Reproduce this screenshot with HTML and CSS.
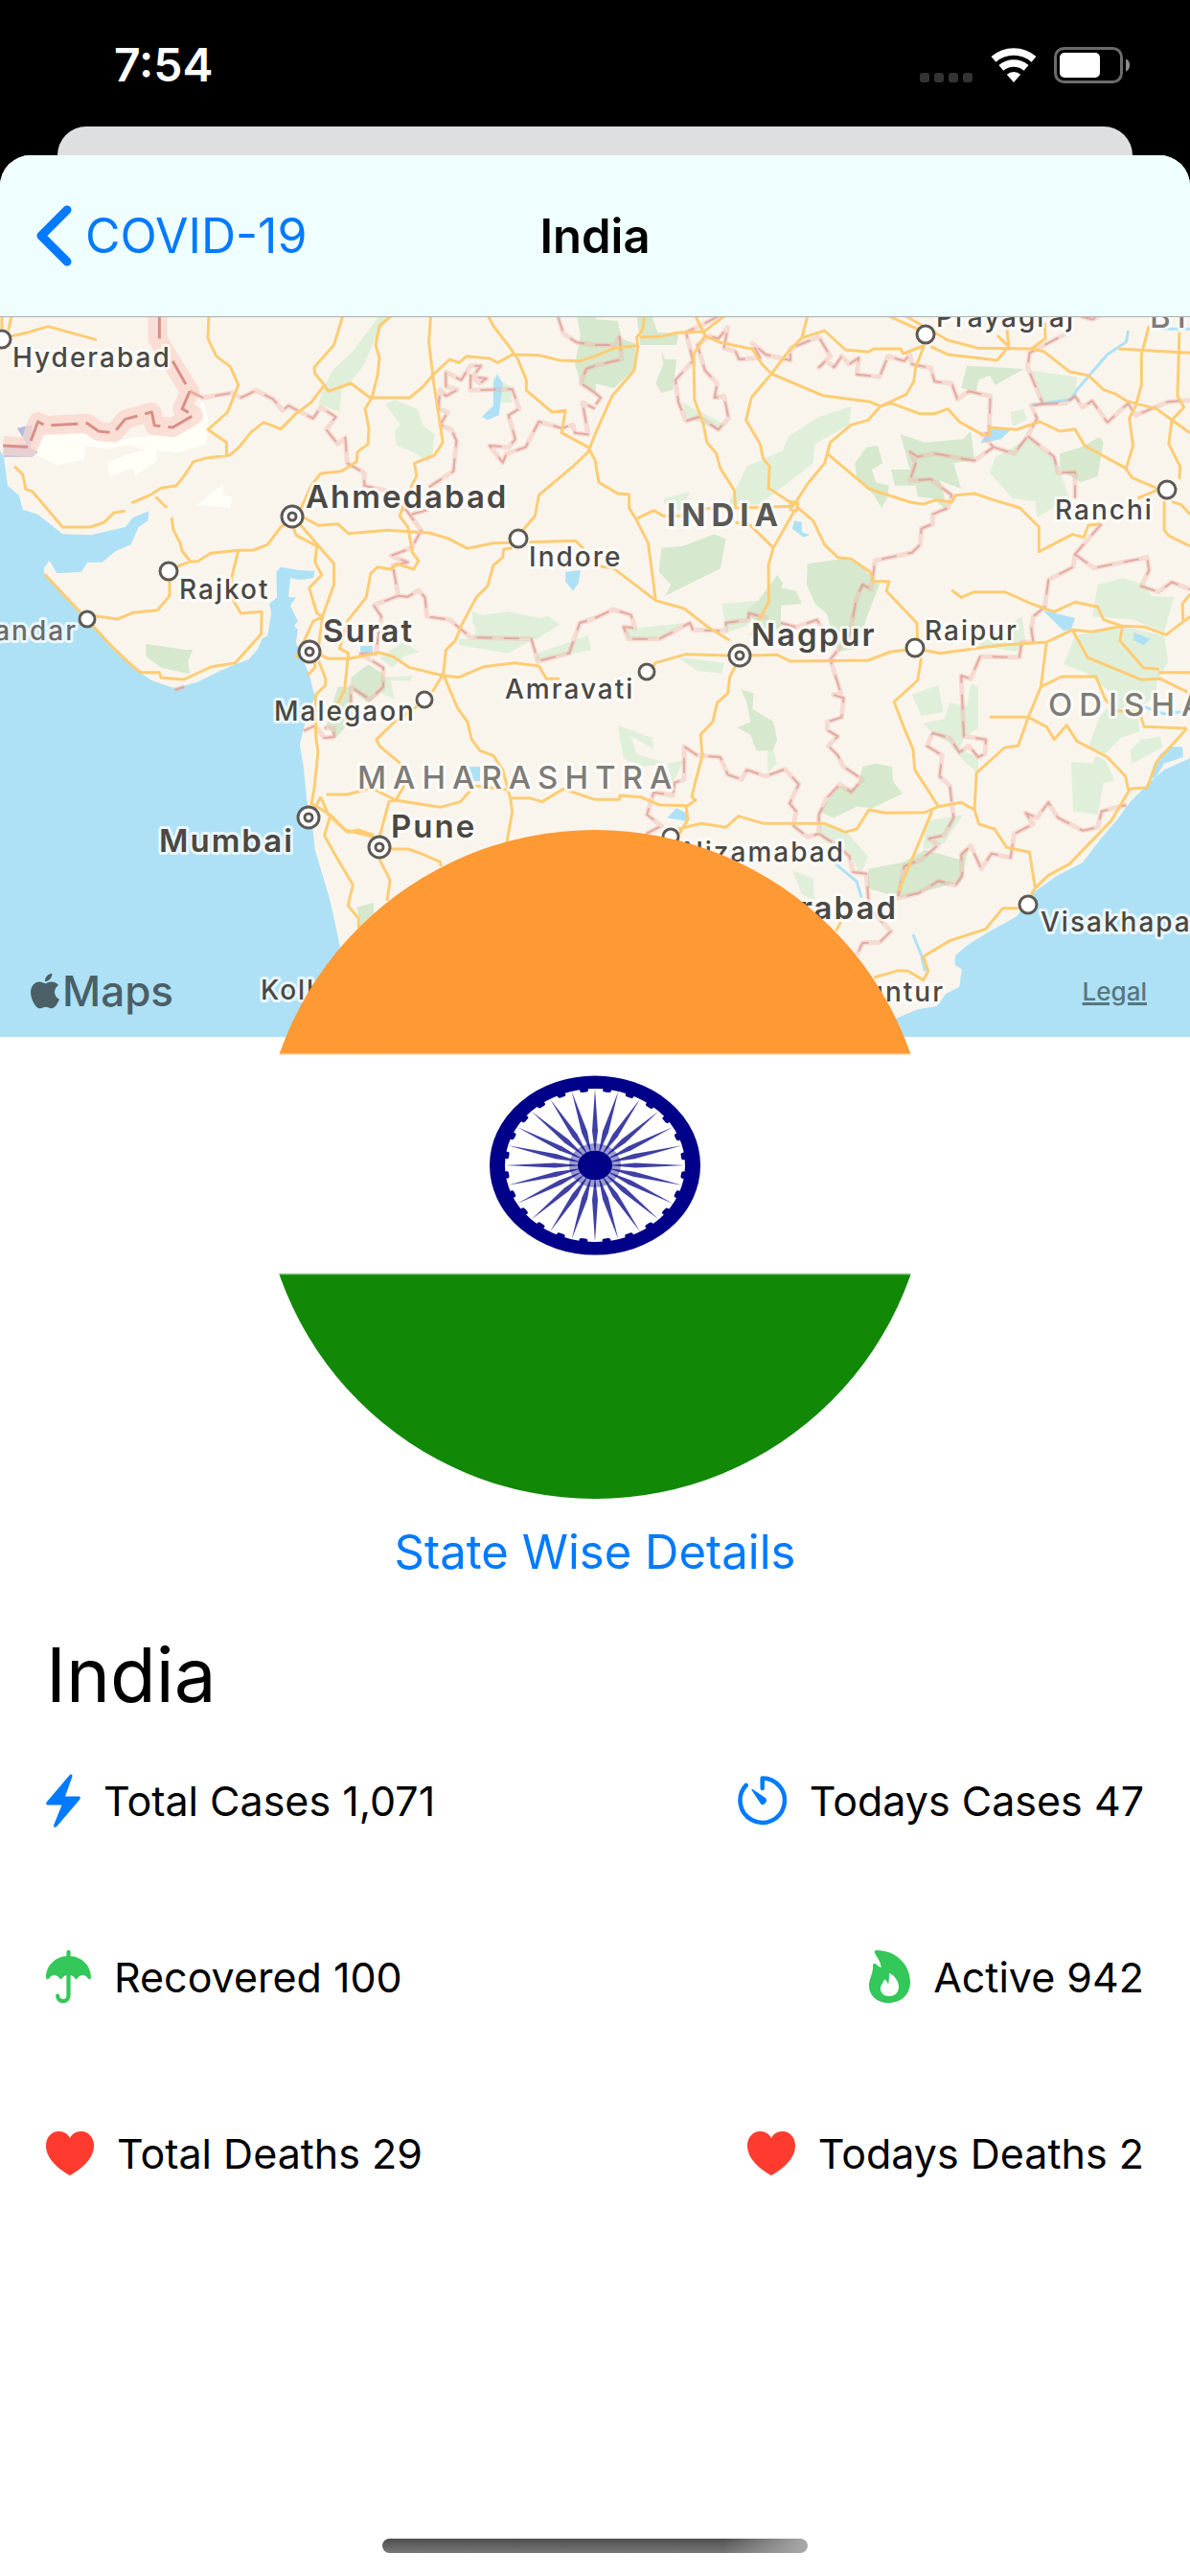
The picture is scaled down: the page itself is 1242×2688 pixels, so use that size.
FILE: index.html
```html
<!DOCTYPE html>
<html lang="en">
<head>
<meta charset="utf-8">
<meta name="viewport" content="width=device-width, initial-scale=1">
<title>India</title>
<link rel="stylesheet" href="styles.css">
</head>
<body>
<div class="status-bar">
  <span class="status-time">7:54</span>
  <div class="status-icons">
    <svg class="signal" width="56" height="36" viewBox="0 0 56 36" aria-hidden="true"><rect x="0" y="26" width="10" height="10" rx="3"/><rect x="15" y="26" width="10" height="10" rx="3"/><rect x="30" y="26" width="10" height="10" rx="3"/><rect x="45" y="26" width="10" height="10" rx="3"/></svg>
    <svg width="48" height="36" viewBox="0 0 48 36" aria-hidden="true"><g fill="none" stroke="#fff"><path d="M3 11.8A32 32 0 0 1 45 11.8" stroke-width="7.6"/><path d="M10.9 20.9A20 20 0 0 1 37.1 20.9" stroke-width="7.4"/></g><path d="M24 36L16.8 27.7A11 11 0 0 1 31.2 27.7Z" fill="#fff"/></svg>
    <svg width="80" height="38" viewBox="0 0 80 38" aria-hidden="true"><rect x="1.5" y="1.5" width="69" height="35" rx="9" fill="none" stroke="#6b6b6b" stroke-width="3"/><rect x="6" y="6" width="42" height="26" rx="5" fill="#fff"/><path d="M75 12.500C80.500 14.500 80.500 23.500 75 25.500Z" fill="#8a8a8a"/></svg>
  </div>
</div>
<div class="sheet-behind"></div>
<div class="sheet">
  <header class="nav-bar">
    <a class="back" href="#covid-19"><svg width="38" height="64" viewBox="0 0 38 64" aria-hidden="true"><path d="M33 5L6 32L33 59" fill="none" stroke="#007aff" stroke-width="9" stroke-linecap="round" stroke-linejoin="round"/></svg>COVID-19</a>
    <h2 class="nav-title">India</h2>
  </header>
  <main>
    <section class="map" aria-label="Map">
      <svg class="map-canvas" viewBox="0 0 1242 751" preserveAspectRatio="xMidYMid slice">
        <!-- western half -->
        <g class="terrain" transform="translate(0 -11) scale(.39605 .33333)">
          <path class="water" d="M-5 440L10 470 20 560 50 590 60 635 100 650 165 712 240 715 330 690 350 660 392 640 390 670 365 690 345 745 305 765 270 800 230 800 215 830 150 835 130 795 115 820 118 840 170 905 225 975 290 1060 350 1130 400 1170 460 1195 520 1175 580 1140 620 1120 655 1105 680 1070 690 1040 705 1030 715 960 710 930 730 910 728 830 740 815 790 825 830 828 825 850 790 855 765 850 760 910 780 910 765 935 785 985 775 1000 785 1010 780 1050 800 1110 815 1150 825 1200 830 1220 800 1320 790 1370 800 1440 808 1540 825 1640 830 1700 850 1780 870 1860 885 1940 895 2000 930 2140 960 2300 -5 2300Z"/>
          <path class="salt" d="M85 460L100 400 200 380 300 420 420 400 500 370 535 290 548 350 545 430 470 455 410 450 415 482 355 530 350 505 290 530 282 490 345 460 385 450 345 432 280 445 225 435 220 480 150 495ZM520 620L585 558 590 590 612 598 605 628Z"/>
          <path class="park" d="M1000 30L1025 35 985 110 960 180 925 235 900 260 895 330 840 305 850 260 875 200 930 140 960 90ZM1015 305L1040 292 1100 320 1115 370 1145 400 1140 460 1130 490 1090 455 1045 435 1040 390 1055 370ZM1245 955L1270 965 1340 955 1425 975 1445 968 1475 995 1415 1040 1245 1040 1255 1010 1245 990ZM1205 1040L1400 1045 1340 1085 1210 1060ZM1415 1085L1550 1030 1558 1075 1410 1110ZM1000 1100L1060 1050 1105 1080 1065 1095 1035 1130ZM1300 220L1345 250 1350 300 1300 300ZM1010 1160L1088 1155 1080 1172 1030 1170 1040 1230 1005 1210Z"/>
          <path class="forest" d="M385 1055L490 1075 508 1073 495 1110 500 1150 425 1130 385 1095ZM925 1160L970 1120 1010 1150 1015 1200 970 1240 925 1200ZM1520 30H1570V270L1530 240 1515 180 1530 90ZM890 1190L925 1190 930 1290 885 1350 860 1310ZM940 1880L985 1865 985 1905 950 1940Z"/>
          <path class="water" d="M1310 210L1325 240 1315 340 1285 355 1270 345 1300 310 1300 240ZM1490 830L1530 825 1525 865 1510 890 1490 860ZM950 1062L982 1062 982 1085 950 1085ZM1235 1440H1265V1485H1245Z"/>
          <path class="sea-shade" d="M45 380L85 370 80 440 100 455 85 470 10 470 10 435 70 430Z"/>
          <path class="nation-glow" d="M415 30L415 100 440 150 500 265 480 320 510 340 455 378 407 372 400 330 330 352 300 395 260 390 230 365 120 372 100 360 75 440 8 435"/>
          <path class="nation" d="M420 30L420 100M455 170L500 265 480 320 510 340 455 378 407 372 400 330 330 352 300 395 260 390 230 365 120 372 100 360 75 440 8 435"/>
          <defs>
            <path id="west-borders" d="M500 265L535 285 610 270 635 285 675 262 720 290 745 325 760 310 825 350 845 315 885 345 860 385 890 430 910 410 915 490 960 520 960 560 1015 575 1060 620 1110 700 1085 755 1030 780 1075 800 1035 810 1050 905 985 935 1005 970 990 1087 950 1087 1010 1130 1010 1190 975 1230 925 1190 925 1260M1050 905L1075 908 1103 888 1120 910 1125 970 1185 980 1240 1035 1400 1040 1418 1110 1500 1085 1528 990 1568 975M1085 650L1130 635M1130 565L1195 515 1203 420 1190 385 1160 370 1180 330 1155 320 1160 260 1175 280 1205 260 1175 250 1175 205 1215 230 1240 185 1268 185 1245 220 1282 225 1265 240 1240 215 1240 262 1350 258 1368 320 1340 340 1358 415 1340 440 1290 435 1325 488 1335 460 1385 440 1420 360 1480 380 1510 370 1515 395 1550 400 1535 300 1568 320M1470 30L1485 85 1520 112 1568 120M1568 185L1545 195 1530 240 1568 270M800 1328L830 1312 855 1350 880 1347 880 1320 855 1318M460 1200L486 1190"/>
          </defs>
          <use class="state-glow" href="#west-borders"/>
          <use class="state" href="#west-borders"/>
          <path class="road" d="M22 75L30 30M5 30V70M30 92L75 80 127 62 255 104M550 30L548 100 570 155 607 188 628 245 600 330 548 385 597 425 597 468M903 30L880 120 828 190 830 210 855 245 820 300 780 335 740 383 695 362 660 395 630 440 605 465 540 475 510 485 485 530 465 560 425 568 395 590 347 615M855 245L865 265 925 240 975 285 1080 285 1115 250 1140 215 1185 165 1210 175 1230 155 1290 162 1312 175 1350 150 1420 152 1475 168 1530 170 1568 155M1030 30L1000 60 990 120 1000 160 995 215 980 285 962 320 972 380 970 430 942 455 940 485 900 515 845 522 820 560 790 640M1135 30L1130 110 1137 180 1143 240 1155 330 1167 425 1145 465 1092 490 1098 530 1085 560 1053 655 1075 690 1087 770 1103 795 1090 822 1045 805 1030 822 995 815 977 835 965 910 915 985 895 1070 918 1085 908 1200 870 1290M1287 30L1300 60 1345 130 1365 165 1387 230 1387 262 1455 330 1490 325 1480 395 1550 440 1568 480M1568 400L1550 455 1510 500 1420 590 1410 655 1378 700M38 500L60 525 68 572 85 578 165 690 238 690 275 675 300 645 330 640M410 595L440 630M452 660L457 700 475 740 480 765 502 798M465 815L500 798 520 798 555 772 628 763 668 762 705 745 740 690 765 670M628 763L610 850 615 920 635 960 690 955 688 1025 620 1115 555 1128 485 1167 425 1162 420 1145 370 1145 340 1115 300 1070 230 980 118 838M250 968L310 978 350 958 415 950 447 905 447 855M800 660L840 685 890 680 918 710 1020 700 1130 708 1180 725 1232 757 1300 740 1365 738M770 680L780 715 835 750 830 800 848 840 815 880 835 960 850 970 825 985 800 1050 780 1100M790 680L880 805 880 870 850 970 840 1060M1395 737L1517 733 1540 760M1350 755L1327 760 1325 785 1300 810 1285 875 1255 910 1215 1000 1200 1045 1175 1075 1168 1155M845 1090L865 1102 920 1102 1000 1083 1035 1095 1080 1130 1168 1155 1210 1160 1275 1127 1357 1115 1420 1125 1440 1165 1475 1165M830 1110L830 1130 810 1155M840 1110L858 1165 858 1185 832 1215V1340L838 1395 828 1510 820 1560M1168 1150L1140 1205M1100 1250L1035 1305 992 1355 1000 1375 1055 1430 1065 1500 1043 1545 1025 1550 1000 1660M1168 1150L1205 1255 1232 1300 1243 1355 1265 1390 1300 1405 1325 1450 1345 1540 1350 1580 1335 1680M860 1527H915L980 1507 1043 1545 1160 1567 1213 1550 1250 1500 1335 1512M820 1555L870 1590 910 1638 985 1660M845 1535L865 1590 915 1645 945 1638 985 1655M845 1535L830 1570M870 1595L855 1655 885 1720 930 1810 917 1875 945 1915 945 1945M1030 1698H1075L1105 1710 1160 1738 1162 1752M1000 1730L1028 1795 1020 1860M1345 1538H1395L1428 1550 1485 1510 1568 1543"/>
        </g>
        <!-- eastern half -->
        <g class="terrain" transform="translate(621 -11) scale(.39605 .33333)">
          <path class="park" d="M675 312L670 370 580 430 575 490 500 560 430 620 350 620 400 500 495 450 510 405 590 345ZM1140 410L1215 480 1250 600 1165 660 1160 610 1100 600 1040 520 1055 470 1100 440ZM1150 200L1270 220 1265 290 1180 300ZM1095 330L1130 320 1138 355 1100 375ZM180 600L250 580 225 640 185 620ZM230 300L345 370 320 385 240 345ZM80 1010L235 990 170 1040 85 1040ZM215 1095L340 1115 335 1148 270 1140ZM1325 870L1390 850 1450 870 1465 905 1525 910 1500 1020 1420 980 1310 970ZM1265 1030L1390 1000 1500 1030 1510 1110 1480 1180 1480 1215 1430 1260 1435 1330 1385 1350 1345 1400 1300 1380 1330 1280 1380 1230 1300 1150 1235 1120ZM1125 970L1135 1050 1110 1080 1010 1060ZM335 930L430 920 400 1000 345 1020Z"/>
          <path class="forest" d="M0 40L60 45 70 100 105 115 110 190 50 255 0 240ZM110 30H150L165 80 220 85 215 120 120 120ZM175 140L185 165 215 165 205 260 175 270 160 240 180 180ZM715 440L745 435 758 490 730 510 740 550 775 560 770 600 755 630 735 590 690 540 685 490ZM805 400L870 425 970 415 990 390 1000 480 945 490 965 570 910 545 930 640 890 600 850 595 845 560 790 560 780 510 830 510ZM1225 460L1280 440 1330 408 1340 425 1325 530 1280 550 1225 510ZM980 185L1130 195 1055 245 1040 215 1010 230 1005 265 965 255ZM175 755L230 750 315 712 345 728 330 820 185 905 200 870 168 830ZM560 805L650 790 690 800 750 870 720 960 690 1070 640 1080 610 960 580 930 558 870ZM400 950L430 920 480 840 495 865 490 880 530 890 545 930 490 935 490 1010 435 1010Z"/>
          <g transform="translate(0 1140)">
            <path class="water" d="M1575 270L1500 310 1460 350 1440 375 1410 410 1380 460 1330 530 1285 600 1220 640 1160 690 1110 770 1040 815 980 860 950 890 948 920 967 935 960 990 925 1010 900 1050 850 1060 790 1090 760 1160H1575ZM1490 260L1515 238H1548L1550 270 1500 290 1480 330 1465 340 1470 300ZM190 460L215 430 240 445V470Z"/>
            <path class="park" d="M455 250H470L480 290 455 318ZM60 170L150 210 155 245 95 205 110 260 190 290 130 300 75 275ZM590 480L660 500 720 580 700 640 670 570 600 530ZM870 470L970 450 920 540 865 560ZM520 625L575 650 578 720 545 700ZM835 75L905 45 918 130 860 140ZM865 165L920 150 935 100 980 110 990 40 1010 50 1010 180 975 205 960 245 890 195ZM935 230L1010 270V320L970 280ZM1255 285L1310 290 1320 265 1345 280 1370 345 1340 350 1325 450 1260 440ZM1410 250L1440 215 1490 205 1495 240 1415 290ZM190 290L235 280 205 350Z"/>
            <path class="forest" d="M385 58L418 70 415 120 470 160 480 215 468 250 425 250 410 200 375 178 410 160 400 100ZM590 440L645 360 690 370 705 300 740 290 783 300 785 345 810 385 730 430 690 425 630 460ZM720 620L810 600 870 560 960 590 985 550 965 660 800 710 720 680Z"/>
            <path class="river" d="M610 560L640 610 690 660 702 710M838 825L860 890 870 940M1440 110L1500 135 1568 125"/>
          </g>
          <path class="water" d="M1040 385L1100 380 1070 415 1015 428ZM525 670L545 675V705L565 715 550 722 520 695ZM1180 950L1265 975 1255 1010 1235 1015ZM1420 1020L1465 1040 1445 1060 1420 1045Z"/>
          <path class="river" d="M1405 75L1400 110 1350 150 1270 260 1255 290 1150 308M1490 70H1568"/>
          <defs>
            <path id="east-borders" d="M0 120L50 120 65 95 70 165 0 185M0 270L15 285 0 310M325 30L285 55 240 80 258 170 212 230 220 300 240 358 275 345 325 385 352 350 340 280 315 285 322 240 290 200 270 120 300 92 325 100 350 65 340 130 370 140 380 165 435 160 415 115 450 150 515 168V130L590 95 620 155 590 190 610 170 630 190 650 155 670 180 695 160 690 212 750 220 772 155 815 170 830 150 835 180 885 192 895 235 940 240 955 290 985 265 1042 280 1038 395 1020 400 1050 440 1000 482 895 460 850 470 830 455 845 490 830 545 885 540 940 590 930 630 890 650V680L860 695 857 745 835 770 738 795 728 885 705 870 690 910 670 1030 620 1105 648 1210 628 1215 655 1225 650 1285 612 1300V1325L640 1345 615 1375 640 1405 655 1440 705 1480 675 1520 645 1495 610 1540 590 1590V1650L630 1680 670 1720 680 1770 715 1775 722 1880 760 1930 780 1955 750 1990 705 1992 690 2030M1050 440L1105 460 1140 405 1165 350 1150 310 1180 305 1140 190 1145 145 1240 85M1140 405L1210 470 1220 520 1265 518V600M1335 680L1265 775 1260 815 1195 855 1185 940 1155 970 1150 1010 1155 1050 1125 1050 1118 1098 1015 1095 990 1165 965 1155 972 1345 1030 1355 1028 1400 1010 1410 985 1375 960 1395 935 1350 890 1335 875 1375 915 1405 908 1470 935 1500 945 1600 920 1655 880 1665 905 1685 860 1730 815 1752 798 1852 855 1835 905 1798 950 1812 968 1780 965 1715 990 1688 1018 1760 1045 1712 1095 1725 1105 1650 1155 1620 1135 1585 1165 1600 1195 1552 1220 1600 1285 1640 1325 1630 1335 1580 1400 1560M1180 305L1240 302 1265 280 1285 315 1310 295 1350 362 1405 303 1425 340 1510 298 1568 293M1265 775L1315 818 1455 785 1460 825 1440 875 1485 893 1520 862 1568 885M0 975L48 948 95 965 105 1005 75 1003 88 1040H170L250 990 258 1012 345 1015V990L405 980V960L455 975M490 990L530 1003 585 980 600 1010M135 1650L175 1625 137 1590 155 1520 205 1530 210 1490 235 1480V1377L270 1405 330 1410 350 1465 387 1480 400 1450 450 1470 500 1448 537 1495 513 1555 530 1580 523 1625 560 1660 590 1650M1280 30L1310 40 1330 30"/>
          </defs>
          <use class="state-glow" href="#east-borders"/>
          <use class="state" href="#east-borders"/>
          <path class="road" d="M130 30L125 75 110 95 113 125 103 200 45 280 0 400M0 155L50 130 110 122M118 95L175 93 215 82 285 78M265 30L290 90 260 150 262 290 285 365 295 425 320 460 330 505 367 575 370 625M340 30L285 80M290 92L330 112 415 133 440 180 465 210M560 30L545 98 510 140 465 210 412 285 398 355 435 430 443 475 460 500 457 568 525 620M545 98L605 75 660 135 720 142 735 132 805 132 812 147 865 123M465 210L600 278 725 298 752 312 780 302 855 335 895 335 930 320 960 360 1020 400 1040 402V378L1110 385 1172 360 1225 390 1265 383 1290 435 1398 505 1415 535 1480 568M868 120L845 190 840 235 820 275 752 312 720 355 675 370 620 425 605 490 560 555 525 620M612 460L722 570 830 612 865 618 900 605 940 612 950 590 1000 585 1050 605 1120 630 1170 690V767L1258 713 1288 722 1300 685 1330 680M775 30L850 70M820 30L930 105 1010 130 1150 132 1182 140 1250 203 1300 215 1340 260 1375 275 1400 295 1480 320 1520 355 1568 395M885 125L930 150 1060 168 1090 125 1060 90M1085 60L1090 125M1185 50L1187 100 1150 132M1460 60L1440 150V245L1425 310 1408 350 1418 435 1400 505M1540 80L1535 280 1552 315 1520 355 1512 430 1542 500 1540 540M1380 132L1568 145M0 480L10 550 60 585 90 588V630L108 665 140 740 150 830 160 920M108 665L155 638 180 655 225 655 270 633 370 630 525 625M370 675L410 685 470 755 525 640M470 755L457 810 458 925 410 1030M515 610L535 615 530 640 515 635ZM535 630L575 670 605 745 640 785 675 790 725 830 735 860H775L768 890 848 990 850 1040M0 810L50 820 160 920 235 945 300 1005 355 1045M150 1130L160 1115 240 1088 355 1092M410 1092L480 1090 515 1110 720 1107 780 1080 820 1075M865 1075L910 1085 1000 1070 1070 1060 1190 1050 1258 1012 1310 1018 1390 1000 1450 1003 1505 1027 1568 970M940 888L965 910 1000 893H1080L1150 930 1210 955 1265 925 1325 940 1340 980 1390 1000M370 1125L355 1160 350 1210 322 1240 310 1300 278 1340 283 1405 265 1485 255 1535 265 1545 240 1565 245 1605 220 1655M860 1100L850 1170 788 1237 815 1320 838 1385 843 1450 905 1565M1190 1050L1175 1190 1142 1285 1115 1375 1080 1380 1005 1460 1000 1575 1012 1620 1053 1635 1085 1693 1145 1708 1160 1820M1258 1012L1298 1098 1440 1168 1490 1165 1568 1210M1390 1005L1383 1045 1445 1130 1487 1135M1485 1145H1568M1500 610V700L1512 717 1568 750M1568 900L1548 930 1550 985M1520 610L1545 620 1568 650M1430 600L1480 575M1040 1285H1142L1190 1315 1210 1355 1243 1310 1270 1360 1350 1410 1398 1470 1405 1510 1455 1505 1480 1425 1560 1320M1175 1190L1230 1158H1320L1345 1230 1375 1265 1435 1270 1447 1315 1560 1320M1410 1510L1360 1610 1250 1745 1195 1780 1160 1820 1145 1850M0 1543H65V1530L120 1535 170 1560 245 1562M220 1635L280 1618 345 1630 378 1595 445 1618H605L660 1645 690 1635 722 1575 765 1585 870 1583 905 1565 965 1552 1000 1575M888 1580L800 1830M1115 1883H1075L1030 1948 935 1985 865 2035 878 2080 865 2108 825 2080 800 2078 735 2100M635 1955L648 1925"/>
        </g>
        <g class="pins" transform="translate(0 -331)">
          <circle cx="2" cy="354" r="9"/><circle cx="176" cy="596" r="9"/><circle cx="91" cy="646" r="8"/><circle cx="541" cy="562" r="9"/><circle cx="443" cy="730" r="8"/><circle cx="700" cy="873" r="8"/><circle cx="955" cy="676" r="9"/><circle cx="675" cy="701" r="8"/><circle cx="966" cy="349" r="9"/><circle cx="1218" cy="511" r="9"/><circle cx="1073" cy="944" r="9"/>
          <circle cx="305" cy="539" r="11"/><circle cx="305" cy="539" r="4"/><circle cx="323" cy="680" r="11"/><circle cx="323" cy="680" r="4"/><circle cx="322" cy="853" r="11"/><circle cx="322" cy="853" r="4"/><circle cx="396" cy="884" r="11"/><circle cx="396" cy="884" r="4"/><circle cx="772" cy="684" r="11"/><circle cx="772" cy="684" r="4"/>
        </g>
        <g class="labels" transform="translate(0 -331)">
          <text x="13" y="383">Hyderabad</text><text x="552" y="591">Indore</text><text x="187" y="625">Rajkot</text><text class="faded end" x="81" y="668">Porbandar</text><text x="527" y="729">Amravati</text><text x="286" y="752">Malegaon</text><text x="272" y="1043">Kolhapur</text><text class="end" x="882" y="899">Nizamabad</text><text class="end" x="986" y="1045">Guntur</text><text x="1086" y="972">Visakhapatnam</text><text x="1101" y="542">Ranchi</text><text x="965" y="668">Raipur</text><text x="977" y="341">Prayagraj</text>
          <text class="city" x="319" y="530">Ahmedabad</text><text class="city" x="337" y="670">Surat</text><text class="city" x="166" y="889">Mumbai</text><text class="city" x="408" y="874">Pune</text><text class="city end" x="937" y="959">Hyderabad</text><text class="city" x="784" y="674">Nagpur</text>
          <text class="region" x="373" y="823">MAHARASHTRA</text><text class="region" x="1094" y="747">ODISHA</text><text class="region" x="1200" y="342">BIHAR</text><text class="country" x="696" y="549">INDIA</text>
        </g>
      </svg>
      <div class="attribution">
        <span class="maps-brand"><svg width="30" height="38" viewBox="2.200 0 19.600 24" aria-hidden="true"><path fill="currentColor" d="M12.152 6.896c-.948 0-2.415-1.078-3.96-1.04-2.04.027-3.91 1.183-4.961 3.014-2.117 3.675-.546 9.103 1.519 12.09 1.013 1.454 2.208 3.09 3.792 3.039 1.52-.065 2.09-.987 3.935-.987 1.831 0 2.35.987 3.96.948 1.637-.026 2.676-1.48 3.676-2.948 1.156-1.688 1.636-3.325 1.662-3.415-.039-.013-3.182-1.221-3.22-4.857-.026-3.04 2.48-4.494 2.597-4.559-1.429-2.09-3.623-2.324-4.39-2.376-2-.156-3.675 1.09-4.61 1.09zM15.53 3.83c.843-1.012 1.4-2.427 1.245-3.83-1.207.052-2.662.805-3.532 1.818-.78.896-1.454 2.338-1.273 3.714 1.338.104 2.715-.688 3.559-1.701"/></svg>Maps</span>
        <a class="legal" href="#legal">Legal</a>
      </div>
    </section>
    <svg class="flag" viewBox="0 0 698 698" role="img" aria-label="Flag of India">
      <defs>
        <linearGradient id="stripes" x2="0" y2="1"><stop offset=".333" stop-color="#ff9933"/><stop offset=".337" stop-color="#fff"/><stop offset=".662" stop-color="#fff"/><stop offset=".666" stop-color="#128807"/></linearGradient>
        <path id="spoke" d="M14 0L42 -3L94 0L42 3Z"/>
        <g id="quarter"><use href="#spoke"/><use href="#spoke" transform="rotate(15)"/><use href="#spoke" transform="rotate(30)"/><use href="#spoke" transform="rotate(45)"/><use href="#spoke" transform="rotate(60)"/><use href="#spoke" transform="rotate(75)"/></g>
      </defs>
      <rect width="698" height="698" fill="url(#stripes)"/>
      <g transform="translate(349 350) scale(1 .85)" fill="#000088">
        <circle r="102" fill="none" stroke="#000088" stroke-width="16"/>
        <circle r="93" fill="none" stroke="#000088" stroke-width="5" stroke-linecap="round" stroke-dasharray="4 20.350" stroke-dashoffset="-10"/>
        <g opacity=".75"><use href="#quarter"/><use href="#quarter" transform="rotate(90)"/><use href="#quarter" transform="rotate(180)"/><use href="#quarter" transform="rotate(270)"/></g>
        <circle r="27" opacity=".4"/><circle r="18"/>
      </g>
    </svg>
    <a class="details-link" href="#states">State Wise Details</a>
    <h1 class="country-name">India</h1>
    <ul class="stats">
      <li><svg width="36" height="56" viewBox="0 0 36 56" fill="#007aff" aria-hidden="true"><path d="M24 2C26 -.5 28.500 0 27 4L20 23.500H34C36 23.500 36.500 25 35 27L12 54C10 57 7 56 8.500 52.500L16.500 32.500H2C0 32.500 -.5 31 1 29Z"/></svg>Total Cases 1,071</li>
      <li><svg width="51" height="52" viewBox="0 0 51 52" aria-hidden="true"><path d="M25.700 13V2.500A23.200 23.200 0 1 1 8.700 9.900" fill="none" stroke="#007aff" stroke-width="4.500" stroke-linecap="round" stroke-linejoin="round"/><path d="M14.200 14.500C15 13.500 16 14 17 15L29.500 23.500A4.500 4.500 0 0 1 24.500 30Z" fill="#007aff"/></svg>Todays Cases 47</li>
      <li><svg width="47" height="56" viewBox="0 0 47 56" aria-hidden="true"><path d="M23.500 6C38 6 47 17 47 28C47 31 44.500 31 43.500 29C41 25 36 25 33 29C32 30.800 31 30.800 30 29C28.500 27 27 26 23.500 26C20 26 18.500 27 17 29C16 30.800 15 30.800 14 29C11 25 6 25 3.500 29C2.500 31 0 31 0 28C0 17 9 6 23.500 6Z" fill="#34c759"/><path d="M23.500 2V47.500A5.700 5.700 0 0 1 12.100 47.500" fill="none" stroke="#34c759" stroke-width="4.200" stroke-linecap="round"/></svg>Recovered 100</li>
      <li><svg width="43" height="56" viewBox="0 0 43 56" fill="#34c759" aria-hidden="true"><path fill-rule="evenodd" d="M8 0C27 0 43 14 43 33C43 46 34 55 20 55C8 55 0 47 0 37C0 29 4.500 25 4 16C4 13.500 6.500 13.500 8 15C9.500 17 11 17 12.700 18.500C12.500 12 8 7 6 3C5 1 6.500 0 8 0ZM21 24C27 26 31 33 31 38C31 45 26 48 21 48C16 48 12 45 12 40C12 36 15 34 16 30.500C18 31 19 33 20 35.500C21 32 21 27 21 24Z"/></svg>Active 942</li>
      <li><svg width="50" height="46" viewBox="0 0 50 46" fill="#ff3b30" aria-hidden="true"><path d="M25 46C18 42 0 31 0 15C0 6 6 0 13.500 0C19 0 23 3 25 7C27 3 31 0 36.500 0C44 0 50 6 50 15C50 31 32 42 25 46Z"/></svg>Total Deaths 29</li>
      <li><svg width="50" height="46" viewBox="0 0 50 46" fill="#ff3b30" aria-hidden="true"><path d="M25 46C18 42 0 31 0 15C0 6 6 0 13.500 0C19 0 23 3 25 7C27 3 31 0 36.500 0C44 0 50 6 50 15C50 31 32 42 25 46Z"/></svg>Todays Deaths 2</li>
    </ul>
  </main>
  <div class="home-indicator"></div>
</div>
</body>
</html>
```
FILE: styles.css
```css
* { box-sizing: border-box; }

body {
  margin: 0;
  min-height: 100vh;
  display: flex;
  flex-direction: column;
  background: #000;
  color: #000;
  font-family: Inter, "Liberation Sans", sans-serif;
  font-size: 43px;
}

a { color: #007aff; text-decoration: none; }
svg { display: block; flex: none; }

.status-bar {
  height: 132px;
  padding: 4px 62px 0 119px;
  display: flex;
  align-items: center;
  justify-content: space-between;
  color: #fff;
}
.status-time { font-size: 48px; font-weight: 600; line-height: 56px; }
.status-icons { display: flex; align-items: center; gap: 18px; }
.signal { fill: #333; }

.sheet-behind {
  height: 60px;
  margin: 0 60px -30px;
  border-radius: 30px 30px 0 0;
  background: #dedfe1;
}

.sheet {
  position: relative;
  flex: 1;
  display: flex;
  flex-direction: column;
  border-radius: 32px 32px 0 0;
  overflow: hidden;
  background: #fff;
}

.nav-bar {
  height: 169px;
  padding: 0 37px;
  display: grid;
  grid-template-columns: 1fr auto 1fr;
  align-items: center;
  background: #efffff;
  border-bottom: 1px solid #a9b0b0;
  font-size: 50px;
}
.back { display: flex; align-items: center; gap: 14px; }
.nav-title { margin: 0; font-size: 49px; font-weight: 600; }

main { display: flex; flex-direction: column; }

.map { position: relative; background: #f9f5ed; }
.map-canvas { width: 100%; height: auto; }

.terrain path { vector-effect: non-scaling-stroke; stroke-linejoin: round; }
.terrain .water { fill: #aee1f6; }
.terrain .salt { fill: #fffff8; }
.terrain .park { fill: #e0efda; }
.terrain .forest { fill: #d6e8cd; }
.terrain .sea-shade { fill: #b4bbdc; }
.terrain .river { fill: none; stroke: #aee1f6; stroke-width: 3; }
.terrain .road { fill: none; stroke: #fecc73; stroke-width: 3; }
.terrain .state-glow { fill: none; stroke: #f3b5ab; stroke-opacity: .4; stroke-width: 5; }
.terrain .state { fill: none; stroke: #dd9f97; stroke-opacity: .8; stroke-width: 2; stroke-dasharray: 16 12; }
.terrain .nation-glow { fill: none; stroke: #fad5cc; stroke-opacity: .75; stroke-width: 20; }
.terrain .nation { fill: none; stroke: #d79088; stroke-width: 3; stroke-dasharray: 28 8; }

.pins { fill: #fff; stroke: #5d5a55; stroke-width: 3; }

.labels {
  font-size: 28px;
  font-weight: 500;
  letter-spacing: 2px;
  fill: #4b4843;
  stroke: #fff;
  stroke-opacity: .75;
  stroke-width: 6;
  stroke-linejoin: round;
  paint-order: stroke;
}
.labels .end { text-anchor: end; }
.labels .faded { fill: #6d6b68; }
.labels .city { font-size: 33px; font-weight: 600; }
.labels .region { font-size: 33px; letter-spacing: 7px; fill: #7f7c77; }
.labels .country { font-size: 33px; font-weight: 700; letter-spacing: 6px; fill: #5a5956; }

.attribution {
  position: absolute;
  right: 0;
  bottom: 20px;
  left: 0;
  padding: 0 45px 0 32px;
  display: flex;
  align-items: center;
  justify-content: space-between;
}
.maps-brand { display: flex; align-items: center; gap: 3px; color: #4a5f66; font-size: 44px; font-weight: 500; line-height: 56px; }
.legal { color: #58757f; font-size: 26px; font-weight: 500; text-decoration: underline; text-decoration-thickness: 3px; }

.flag {
  position: relative;
  width: 698px;
  max-width: 80%;
  margin: -216px auto 26px;
  border-radius: 50%;
}

.details-link { align-self: center; font-size: 49px; line-height: 60px; }

.country-name { margin: 50px 48px 55px; font-size: 78px; font-weight: 400; line-height: 96px; }

.stats {
  margin: 0;
  padding: 0 48px;
  display: grid;
  grid-template-columns: auto auto;
  grid-auto-rows: 56px;
  justify-content: space-between;
  row-gap: 128px;
  list-style: none;
}
.stats li { display: flex; align-items: center; gap: 24px; }
.stats li:nth-child(even) { justify-content: flex-end; }

.home-indicator {
  width: 444px;
  height: 15px;
  margin: auto auto 24px;
  border-radius: 8px;
  background: linear-gradient(90deg, transparent 80%, #aaa), linear-gradient(#4d4f4d, #777);
}
```
